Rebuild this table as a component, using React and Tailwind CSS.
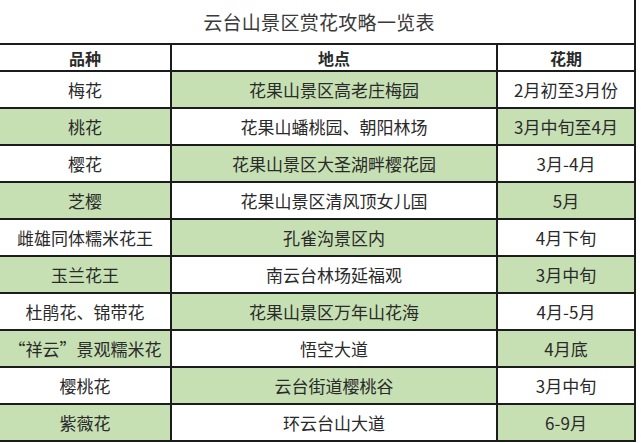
import React from 'react';

const rows = [
  ['梅花', '花果山景区高老庄梅园', '2月初至3月份'],
  ['桃花', '花果山蟠桃园、朝阳林场', '3月中旬至4月'],
  ['樱花', '花果山景区大圣湖畔樱花园', '3月-4月'],
  ['芝樱', '花果山景区清风顶女儿国', '5月'],
  ['雌雄同体糯米花王', '孔雀沟景区内', '4月下旬'],
  ['玉兰花王', '南云台林场延福观', '3月中旬'],
  ['杜鹃花、锦带花', '花果山景区万年山花海', '4月-5月'],
  ['“祥云”景观糯米花', '悟空大道', '4月底'],
  ['樱桃花', '云台街道樱桃谷', '3月中旬'],
  ['紫薇花', '环云台山大道', '6-9月'],
];

const green = 'bg-[#c6e0b4]';

export default function App() {
  return (
    <div
      className="w-[641px] h-[443px] bg-white overflow-hidden text-[#2a2a2a]"
      style={{ fontFamily: '"Noto Sans CJK SC", "Noto Sans", sans-serif' }}
    >
      <div className="w-[636px]">
        <div className="h-[43px] border-r-2 border-[#1c1c1c] flex items-center justify-center pt-[1px] pl-[4px]">
          <span className="text-[19px] tracking-[0.3px] text-[#3a3a3a]">云台山景区赏花攻略一览表</span>
        </div>

        <div className="flex h-[27px] border-t-2 border-[#1c1c1c] text-[16px] font-bold">
          <div className="w-[172px] border-r-2 border-[#1c1c1c] flex items-center justify-center">品种</div>
          <div className="w-[326px] border-r-2 border-[#1c1c1c] flex items-center justify-center">地点</div>
          <div className="w-[138px] border-r-2 border-[#1c1c1c] flex items-center justify-center">花期</div>
        </div>

        {rows.map((r, i) => {
          const odd = i % 2 === 1;
          const last = i === rows.length - 1;
          return (
            <div
              key={i}
              className={`flex border-t-2 border-[#1c1c1c] text-[17px] ${last ? 'h-[39px] border-b-2' : 'h-[37px]'}`}
            >
              <div className={`w-[172px] border-r-2 border-[#1c1c1c] flex items-center justify-center ${odd ? green : ''}`}>
                {r[0]}
              </div>
              <div className={`w-[326px] border-r-2 border-[#1c1c1c] flex items-center justify-center ${odd ? '' : green}`}>
                {r[1]}
              </div>
              <div className={`w-[138px] border-r-2 border-[#1c1c1c] flex items-center justify-center ${odd ? green : ''}`}>
                {r[2]}
              </div>
            </div>
          );
        })}
      </div>
    </div>
  );
}
